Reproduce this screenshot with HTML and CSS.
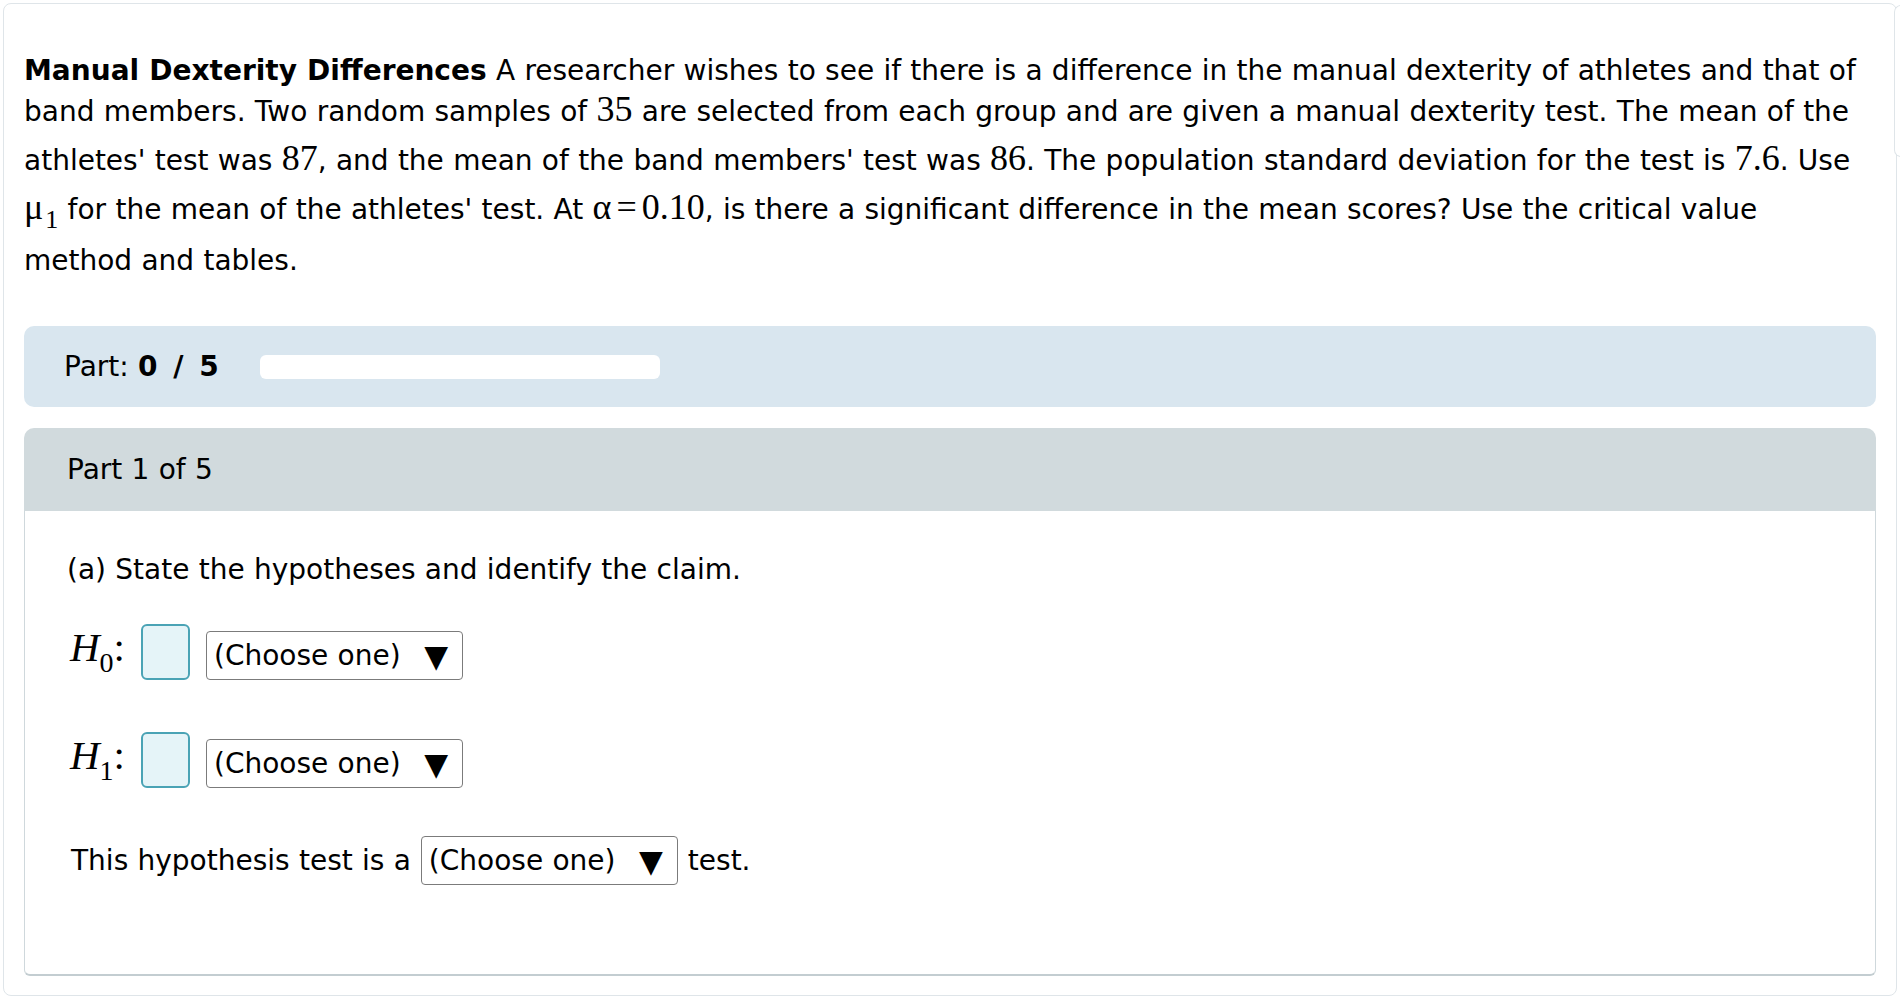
FILE: index.html
```html
<!DOCTYPE html>
<html>
  <head>
    <title>Manual Dexterity Differences</title>
    <link rel="stylesheet" href="styles.css">
  </head>
  <body>
    <div class="frame">
      <div class="side-tab"></div>

      <p class="question"><b>Manual Dexterity Differences</b> A researcher wishes to see if there is a difference in the manual dexterity of athletes and that of band members. Two random samples of <span class="math">35</span> are selected from each group and are given a manual dexterity test. The mean of the athletes' test was <span class="math">87</span>, and the mean of the band members' test was <span class="math">86</span>. The population standard deviation for the test is <span class="math">7.6</span>. Use <span class="math with-sub">μ<sub>1</sub></span> for the mean of the athletes' test. At <span class="math">α<span class="eq">=</span>0.10</span>, is there a significant difference in the mean scores? Use the critical value method and tables.</p>

      <div class="progress-card">
        <span class="progress-label">Part: <b>0 / 5</b></span>
        <div class="progress-bar"></div>
      </div>

      <div class="part-card">
        <div class="part-header">Part 1 of 5</div>
        <div class="part-body">
          <p class="prompt">(a) State the hypotheses and identify the claim.</p>

          <div class="hyp-row">
            <span class="hyp-label"><i>H</i><sub>0</sub>:</span>
            <span class="answer-box"></span>
            <span class="select">(Choose one) <span class="arrow">▼</span></span>
          </div>

          <div class="hyp-row second">
            <span class="hyp-label"><i>H</i><sub>1</sub>:</span>
            <span class="answer-box"></span>
            <span class="select">(Choose one) <span class="arrow">▼</span></span>
          </div>

          <div class="test-row">
            This hypothesis test is a
            <span class="select">(Choose one) <span class="arrow">▼</span></span>
            test.
          </div>
        </div>
      </div>
    </div>
  </body>
</html>
```

FILE: styles.css
```css
body {
  margin: 0;
  font-family: "DejaVu Sans", Verdana, sans-serif;
  font-size: 28px;
  word-spacing: 0.4px;
  color: black;
  background-color: white;
  overflow: hidden;
}
.frame {
  position: relative;
  margin: 3px 0 0 3px;
  width: 1894px;
  height: 993px;
  box-sizing: border-box;
  border: 1px solid #dfe5e9;
  border-radius: 8px;
  padding: 46px 20px 0 20px;
}
.side-tab {
  position: absolute;
  left: 1890px;
  top: 1px;
  width: 6px;
  height: 150px;
  border: 1px solid #dfe5e9;
  border-right: none;
  border-radius: 8px 0 0 8px;
  background-color: white;
}
.question {
  margin: 0 12px 0 0;
  line-height: 41px;
}
.math {
  display: inline-block;
  font-family: "Liberation Serif", "Times New Roman", serif;
  font-size: 36px;
  line-height: 1;
  padding-bottom: 13px;
}
.math sub {
  font-size: 26px;
  line-height: 1;
  vertical-align: -9px;
  margin-left: 2px;
}
.math.with-sub {
  padding-bottom: 7px;
}
.eq {
  margin: 0 5px;
}
.progress-card {
  margin-top: 45px;
  height: 81px;
  background-color: #d9e6ef;
  border-radius: 10px;
  display: flex;
  align-items: center;
  padding-left: 40px;
}
.progress-label {
  width: 196px;
}
.progress-label b {
  word-spacing: 6px;
}
.progress-bar {
  width: 400px;
  height: 24px;
  background-color: white;
  border-radius: 6px;
}
.part-card {
  margin-top: 21px;
}
.part-header {
  height: 83px;
  background-color: #d1dadd;
  border-radius: 10px 10px 0 0;
  display: flex;
  align-items: center;
  padding-left: 43px;
}
.part-body {
  height: 465px;
  box-sizing: border-box;
  border: 1px solid #cfd8dc;
  border-top: none;
  border-bottom: 2px solid #c3cdd1;
  border-radius: 0 0 6px 6px;
  padding: 38px 0 0 42px;
}
.prompt {
  margin: 0;
  line-height: 41px;
}
.hyp-row {
  display: flex;
  align-items: flex-end;
  margin-top: 34px;
  padding-left: 3px;
}
.hyp-row.second {
  margin-top: 52px;
}
.hyp-label {
  font-family: "Liberation Serif", "Times New Roman", serif;
  font-size: 41px;
  line-height: 1;
  width: 71px;
  align-self: center;
}
.hyp-label sub {
  font-size: 28px;
  line-height: 1;
  vertical-align: -11px;
}
.answer-box {
  width: 49px;
  height: 56px;
  box-sizing: border-box;
  border: 2px solid #4aa3b5;
  border-radius: 6px;
  background-color: #e5f4f8;
  margin-right: 16px;
}
.select {
  display: inline-flex;
  align-items: center;
  justify-content: space-between;
  width: 257px;
  height: 49px;
  box-sizing: border-box;
  border: 1px solid #7b7b7b;
  border-radius: 4px;
  padding: 0 14px 0 7px;
  background-color: white;
}
.arrow {
  font-size: 31px;
}
.test-row {
  display: flex;
  align-items: center;
  gap: 10px;
  margin-top: 48px;
  padding-left: 4px;
}
```
